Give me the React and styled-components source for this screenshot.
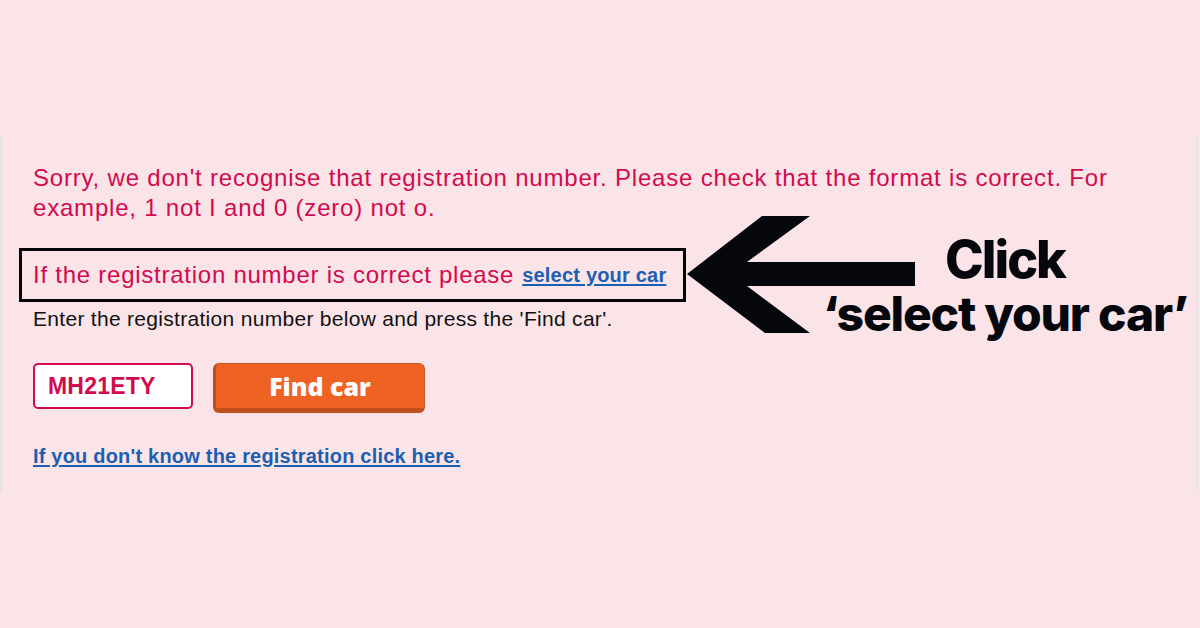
import React from "react";
import styled, { createGlobalStyle } from "styled-components";

const GlobalStyle = createGlobalStyle`
  body {
    margin: 0;
    background: #fbe4e8;
    font-family: "Liberation Sans", Arial, sans-serif;
  }
`;

const Page = styled.div`
  position: relative;
  width: 1200px;
  height: 628px;
  padding-top: 136px;
  box-sizing: border-box;
  overflow: hidden;
  background: #fbe4e8;
`;

const Card = styled.section`
  width: 1198px;
  height: 355px;
  box-sizing: border-box;
  padding: 27px 60px 0 31px;
  border-left: 2px solid #e2e2ea;
  border-right: 2px solid #e6e4ec;
  display: flex;
  flex-direction: column;
  align-items: flex-start;
`;

const Message = styled.p`
  margin: 0;
  color: #d20a4e;
  font-size: 24px;
  line-height: 30px;
  letter-spacing: 0.8px;
`;

const Notice = styled.div`
  margin: 25px 0 0 -14px;
  width: 667px;
  height: 54px;
  box-sizing: border-box;
  border: 3px solid #050608;
  padding-left: 11px;
  display: flex;
  align-items: center;
  gap: 8px;
  color: #d20a4e;
  font-size: 24px;
  letter-spacing: 0.75px;
`;

const Link = styled.a`
  color: #1b5fb3;
  font-weight: 700;
  font-size: 20px;
  letter-spacing: 0.2px;
  text-decoration: underline;
  text-underline-offset: 2px;
  cursor: pointer;
`;

const Hint = styled.p`
  margin: 5px 0 0;
  color: #111;
  font-size: 21px;
  line-height: 24px;
  letter-spacing: 0.3px;
`;

const FormRow = styled.div`
  margin-top: 32px;
  display: flex;
  align-items: flex-start;
  gap: 20px;
`;

const RegInput = styled.div`
  width: 160px;
  height: 46px;
  box-sizing: border-box;
  border: 2.5px solid #d20a4e;
  border-radius: 5px;
  background: #fff;
  padding-left: 13px;
  display: flex;
  align-items: center;
  color: #d20a4e;
  font-weight: 700;
  font-size: 23px;
  letter-spacing: 0.2px;
`;

const FindButton = styled.button`
  width: 212px;
  height: 50px;
  box-sizing: border-box;
  border: 1px solid #c9561f;
  border-left: 3px solid #bf4f1b;
  border-bottom: 5px solid #bf4f1b;
  border-radius: 6px;
  background: #ee6324;
  color: #fff;
  font-family: "Open Sans", sans-serif;
  font-weight: 800;
  font-size: 25px;
  padding: 0;
  cursor: pointer;
`;

const BottomLink = styled.div`
  margin-top: 32px;
  line-height: 22px;
`;

const Annotation = styled.div`
  position: absolute;
  left: 805px;
  top: 234px;
  width: 400px;
  text-align: center;
  color: #05070d;
  font-family: Inter, sans-serif;
  font-weight: 800;
`;

const Big = styled.div`
  font-size: 52px;
  line-height: 52px;
  letter-spacing: -2px;
`;

const Sub = styled.div`
  font-size: 48px;
  line-height: 56px;
  letter-spacing: -1.2px;
`;

const Arrow = styled.svg`
  position: absolute;
  left: 680px;
  top: 210px;
`;

const App = () => {
  return (
    <Page>
      <GlobalStyle />
      <Card>
        <Message>
          Sorry, we don't recognise that registration number. Please check that
          the format is correct. For example, 1 not I and 0 (zero) not o.
        </Message>
        <Notice>
          If the registration number is correct please
          <Link>select your car</Link>
        </Notice>
        <Hint>Enter the registration number below and press the 'Find car'.</Hint>
        <FormRow>
          <RegInput>MH21ETY</RegInput>
          <FindButton>Find car</FindButton>
        </FormRow>
        <BottomLink>
          <Link>If you don't know the registration click here.</Link>
        </BottomLink>
      </Card>
      <Arrow width="240" height="130" viewBox="0 0 240 130">
        <path
          d="M7 64 L82 6 L130 6 L67 52 L235 52 L235 76 L67 76 L130 123 L85 123 Z"
          fill="#05070d"
        />
      </Arrow>
      <Annotation>
        <Big>Click</Big>
        <Sub>‘select your car’</Sub>
      </Annotation>
    </Page>
  );
};

export default App;
